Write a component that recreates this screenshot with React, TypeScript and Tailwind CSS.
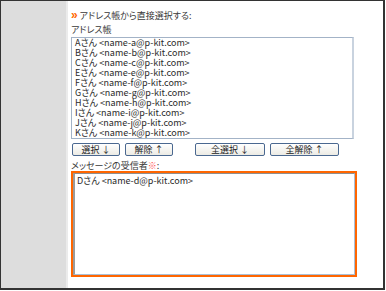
import React from "react";

const addrs = [
  ["A", "a"],
  ["B", "b"],
  ["C", "c"],
  ["E", "e"],
  ["F", "f"],
  ["G", "g"],
  ["H", "h"],
  ["I", "i"],
  ["J", "j"],
  ["K", "k"],
];

function Btn({ label, w }: { label: string; w: string }) {
  return (
    <button
      className={`${w} h-[13px] border border-[#4a6890] rounded-[2px] bg-gradient-to-b from-white to-[#ecebe4] text-[9px] leading-[11px] text-[#222] flex items-center justify-center`}
    >
      {label}
    </button>
  );
}

export default function App() {
  return (
    <div className="w-[386px] h-[291px] bg-white">
      <div
        className="w-[385px] h-[290px] flex border-t border-l border-r-2 border-b-2 border-[#333] text-[#3a3a3a] [font-feature-settings:'palt']"
        style={{ fontFamily: '"Noto Sans CJK JP", "Noto Sans", sans-serif' }}
      >
        <div className="w-[67px] shrink-0 bg-[#dddddd] border-r-2 border-[#ebebeb]" />
        <div className="flex-1 pl-[3px] pt-[9px] text-[9px]">
          <div className="leading-[11px] h-[11px] flex items-center">
            <span
              className="text-[#ff6600] font-bold text-[12px] leading-[11px] mr-[2px] -mt-[1px]"
              style={{ fontFamily: '"Liberation Sans", sans-serif' }}
            >
              »
            </span>
            <span>アドレス帳から直接選択する:</span>
          </div>
          <div className="mt-[3px] leading-[11px] h-[11px]">アドレス帳</div>
          <div className="mt-[2px] w-[283px] h-[102px] border border-[#a3b3c7] border-r-2 border-r-[#c9d3df] bg-white pl-[3px] overflow-hidden">
            {addrs.map(([u, l]) => (
              <div key={u} className="h-[10px] leading-[10px] whitespace-nowrap text-[#2a2a2a]">
                {u}さん &lt;name-{l}@p-kit.com&gt;
              </div>
            ))}
          </div>
          <div className="mt-[4px] flex items-center pl-[1px]">
            <Btn label="選択 ↓" w="w-[48px]" />
            <div className="w-[5px]" />
            <Btn label="解除 ↑" w="w-[48px]" />
            <div className="w-[22px]" />
            <Btn label="全選択 ↓" w="w-[70px]" />
            <div className="w-[5px]" />
            <Btn label="全解除 ↑" w="w-[69px]" />
          </div>
          <div className="mt-[4px] leading-[11px] h-[11px]">
            メッセージの受信者<span className="text-[#ff4d4d]">※</span>:
          </div>
          <div className="w-[286px] h-[106px] border-2 border-[#ff6600]">
            <div className="w-full h-full border border-[#8f8f8f] border-l-2 border-l-[#9a9a9a] border-r-[#a9bfd6] border-b-[#a9bfd6] bg-white pl-[2px] pt-[2px]">
              <div className="h-[10px] leading-[10px] whitespace-nowrap text-[#2a2a2a]">
                Dさん &lt;name-d@p-kit.com&gt;
              </div>
            </div>
          </div>
        </div>
      </div>
    </div>
  );
}
